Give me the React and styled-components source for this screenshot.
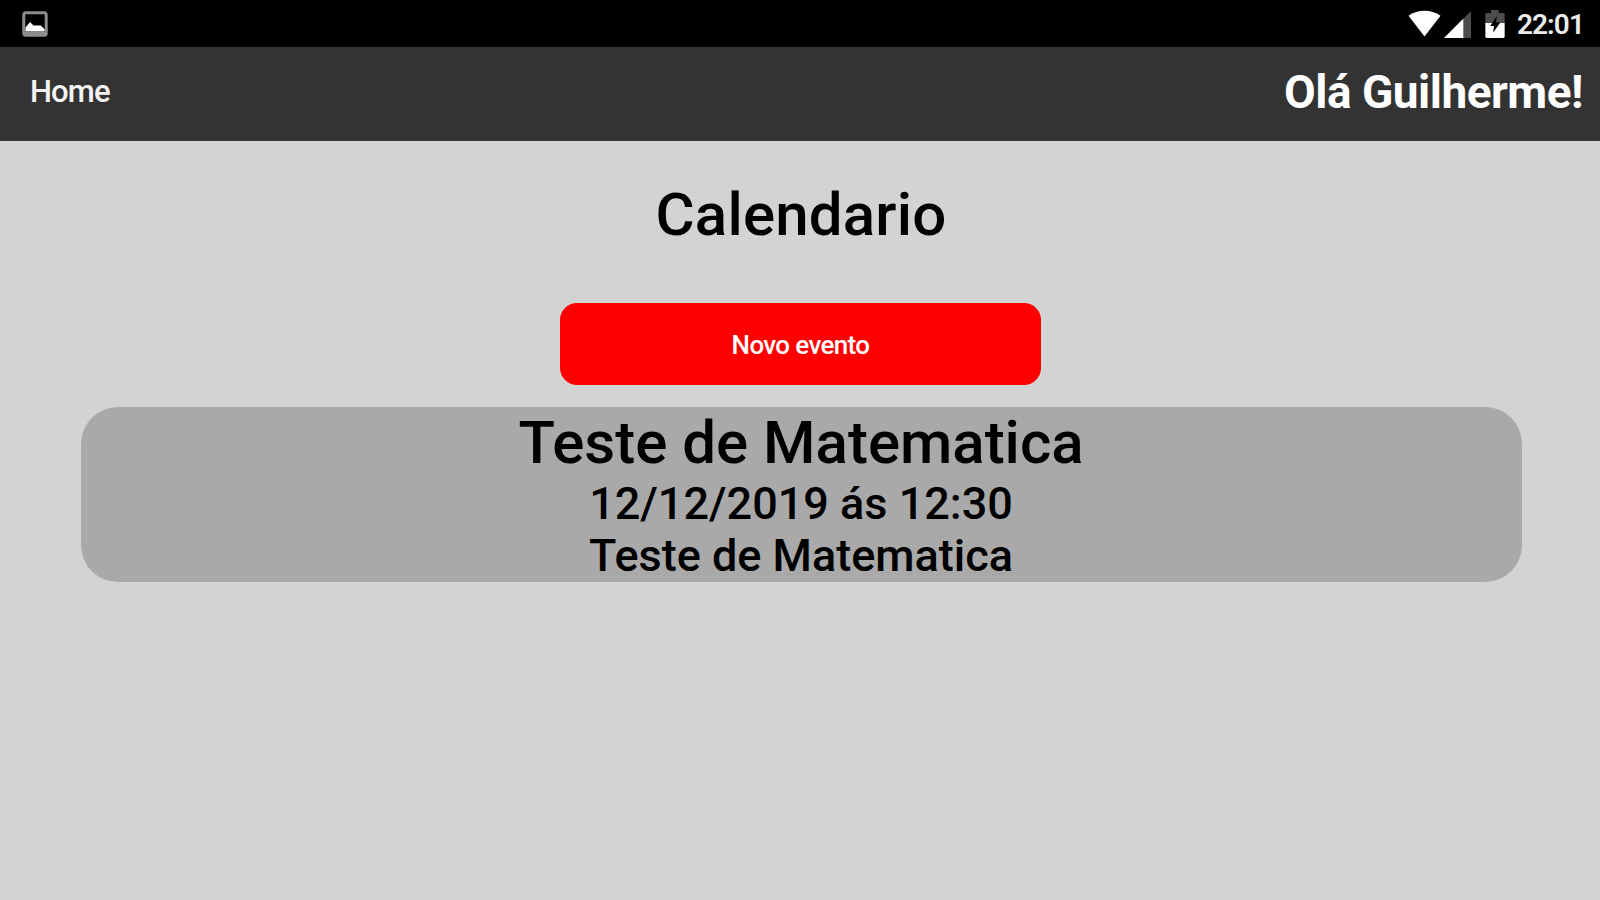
import styled, { createGlobalStyle } from "styled-components";

const events = [{ title: "Teste de Matematica", date: "12/12/2019", time: "12:30", description: "Teste de Matematica" }];

export default function App() {
 return (
  <Page>
   <GlobalStyle />
   {/* Android status bar */}
   <StatusBar>
    <PictureIcon />
    <StatusIcons>
     <WifiIcon />
     <SignalIcon />
     <BatteryIcon />
     <Clock>22:01</Clock>
    </StatusIcons>
   </StatusBar>

   {/* Navigation */}
   <Header>
    <HomeLink>Home</HomeLink>
    <Greeting>Olá Guilherme!</Greeting>
   </Header>

   {/* Calendar */}
   <Content>
    <Title>Calendario</Title>
    <NewEventButton>Novo evento</NewEventButton>
    {events.map((event, index) => (
     <EventCard key={index}>
      <EventTitle>{event.title}</EventTitle>
      <EventText>
       {event.date} ás {event.time}
      </EventText>
      <EventText>{event.description}</EventText>
     </EventCard>
    ))}
   </Content>
  </Page>
 );
}

const PictureIcon = () => (
 <svg width="26" height="26" viewBox="0 0 26 26">
  <rect x="1.800" y="1.800" width="22.400" height="22.400" rx="2" fill="none" stroke="#8c8c8c" strokeWidth="3" />
  <path d="M3.500 20.500V16.500L8 11L11.500 14.500H18.500L22.500 18V20.500Z" fill="#fff" />
  <path d="M3 20.500H23V23.500H3Z" fill="#8c8c8c" />
 </svg>
);

const WifiIcon = () => (
 <svg width="33" height="28" viewBox="0 0 34 28">
  <path d="M0.500 5.500C10 -1.500 24 -1.500 33.500 5.500L17 27Z" fill="#fff" />
 </svg>
);

const SignalIcon = () => (
 <svg width="27" height="27" viewBox="0 0 28 28">
  <path d="M0 28L28 0V28Z" fill="#4d4d4d" />
  <path d="M0 28L20 8V28Z" fill="#fff" />
 </svg>
);

const BatteryIcon = () => (
 <svg width="20" height="28" viewBox="0 0 20 29">
  <path d="M6 0H14V3H18.500Q20 3 20 4.500V14H0V4.500Q0 3 1.500 3H6Z" fill="#4d4d4d" />
  <path d="M0 13.500H20V27.500Q20 29 18.500 29H1.500Q0 29 0 27.500Z" fill="#fff" />
  <path d="M12 6L5 16.500H9L8 23.500L15.500 13H11Z" fill="#000" />
 </svg>
);

const GlobalStyle = createGlobalStyle`
 * {
  box-sizing: border-box;
 }

 body {
  margin: 0;
  font-family: Roboto, sans-serif;
 }
`;

const Page = styled.div`
 height: 900px;
 overflow: hidden;
 background-color: #d3d3d3;
`;

const StatusBar = styled.div`
 display: flex;
 align-items: center;
 justify-content: space-between;
 height: 47px;
 padding: 1px 16px 0 22px;
 background-color: #000;
`;

const StatusIcons = styled.div`
 display: flex;
 align-items: center;

 svg:nth-of-type(2) {
  margin-left: 3px;
 }

 svg:nth-of-type(3) {
  margin: 0 0 1px 14px;
 }
`;

const Clock = styled.span`
 margin-left: 12px;
 color: #ececec;
 font-size: 28px;
 font-weight: 600;
 letter-spacing: -0.9px;
 line-height: 44px;
 padding-top: 2px;
`;

const Header = styled.header`
 display: flex;
 align-items: center;
 justify-content: space-between;
 height: 94px;
 padding: 0 17px 4px 30px;
 background-color: #333;
`;

const HomeLink = styled.a`
 padding-bottom: 1px;
 color: #f4f4f4;
 font-size: 31px;
 font-weight: 500;
 letter-spacing: -0.9px;
`;

const Greeting = styled.div`
 color: #fff;
 font-size: 46px;
 font-weight: bold;
 letter-spacing: -0.5px;
`;

const Content = styled.main`
 display: flex;
 flex-direction: column;
 align-items: center;
 padding: 40px 0 0 2px;
`;

const Title = styled.h1`
 margin: 0;
 font-size: 60px;
 font-weight: 500;
 letter-spacing: 0.2px;
 line-height: 68px;
`;

const NewEventButton = styled.button`
 width: 481px;
 height: 82px;
 margin: 54px 1px 0 0;
 padding: 2px 0 0;
 border: none;
 border-radius: 17px;
 background-color: #f00;
 color: #fff;
 font-family: inherit;
 font-size: 26px;
 font-weight: 500;
 letter-spacing: -0.65px;
`;

const EventCard = styled.section`
 width: 1441px;
 height: 175px;
 margin-top: 22px;
 padding-top: 1px;
 border-radius: 37px;
 background-color: #a9a9a9;
 text-align: center;
`;

const EventTitle = styled.h2`
 margin: 0;
 font-size: 60px;
 font-weight: 500;
 line-height: 70px;
`;

const EventText = styled.p`
 margin: 0;
 font-size: 45px;
 font-weight: 500;
 line-height: 52px;
`;
